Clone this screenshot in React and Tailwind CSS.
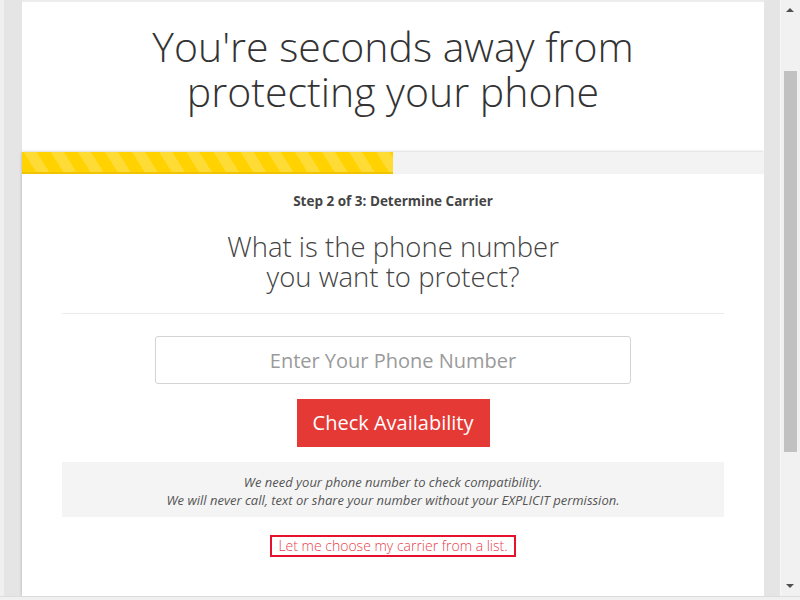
import React from 'react'

const font = { fontFamily: '"Open Sans", "Liberation Sans", sans-serif' }

const Scrollbar = () => {
  return (
    <div className="w-[19px] bg-[#f1f1f1] border-l border-[#f7f7f7] flex flex-col items-center">
      <div className="h-[20px] flex items-center justify-center">
        <div className="w-0 h-0 border-l-[4px] border-r-[4px] border-b-[4px] border-l-transparent border-r-transparent border-b-[#505050]" />
      </div>
      <div className="mt-[51px] w-[13px] h-[381px] bg-[#c1c1c1]" />
      <div className="flex-1" />
      <div className="h-[20px] flex items-center justify-center">
        <div className="w-0 h-0 border-l-[4px] border-r-[4px] border-t-[4px] border-l-transparent border-r-transparent border-t-[#505050]" />
      </div>
    </div>
  )
}

const ProgressBar = () => {
  return (
    <div className="h-[22px] bg-[#f3f3f3] flex">
      <div className="w-1/2 h-full border-b-2 border-[#f0c400] bg-[repeating-linear-gradient(58deg,#ffd200_0px,#ffd200_12px,#ffdb35_12px,#ffdb35_23px)]" />
    </div>
  )
}

export default function App() {
  return (
    <div className="w-[800px] h-[600px] flex flex-col overflow-hidden bg-[#f0f0f0]" style={font}>
      <div className="h-[596px] flex">
        <div className="w-[4px] bg-[#f0f0f0]" />
        <div className="w-[18px] bg-[#e5e5e5]" />
        <main className="w-[742px] bg-white border-t-2 border-[#ececec] flex flex-col">
          <header className="h-[150px] pt-[22px] text-center">
            <h1 className="text-[41px] leading-[45px] font-light text-[#333]">
              <span className="block">You're seconds away from</span>
              <span className="block">protecting your phone</span>
            </h1>
          </header>
          <section className="flex-1 bg-white shadow-[0_0_3px_rgba(0,0,0,0.25)] flex flex-col">
            <ProgressBar />
            <div className="px-[40px] flex flex-col items-center">
              <p className="mt-[18px] text-[13.5px] leading-[18px] font-bold text-[#444]">
                Step 2 of 3: Determine Carrier
              </p>
              <h2 className="mt-[22px] text-[27.5px] leading-[30px] font-light text-[#444] text-center">
                <span className="block">What is the phone number</span>
                <span className="block">you want to protect?</span>
              </h2>
              <div className="mt-[21px] w-full h-px bg-[#ececec]" />
              <input
                type="text"
                placeholder="Enter Your Phone Number"
                className="mt-[22px] w-[476px] h-[48px] border border-[#d4d4d4] rounded-[3px] text-center text-[20px] text-[#333] placeholder:text-[#9a9a9a] outline-none"
              />
              <button className="mt-[15px] w-[193px] h-[48px] bg-[#e53935] text-white text-[20px] leading-none">
                Check Availability
              </button>
              <div className="mt-[15px] w-full h-[55px] bg-[#f4f4f4] flex flex-col items-center justify-center pt-[2px] text-[13px] leading-[18px] italic text-[#555]">
                <span>We need your phone number to check compatibility.</span>
                <span>We will never call, text or share your number without your EXPLICIT permission.</span>
              </div>
              <a className="mt-[18px] px-[6px] border-2 border-[#e8112d] text-[14px] leading-[18px] font-light text-[#e8404a]">
                Let me choose my carrier from a list.
              </a>
            </div>
          </section>
        </main>
        <div className="w-[16px] bg-[#e5e5e5]" />
        <Scrollbar />
      </div>
      <div className="h-[4px] border-t border-[#dcdcdc] bg-[#f0f0f0]" />
    </div>
  )
}
